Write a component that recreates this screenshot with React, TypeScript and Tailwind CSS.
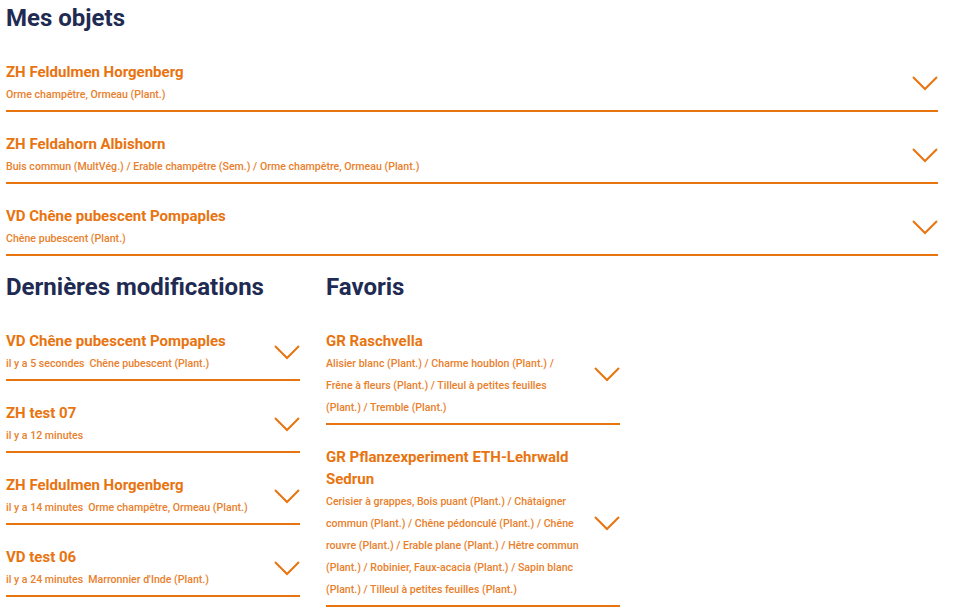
import React from 'react';

type Item = {
  title: string;
  time?: string;
  species: string;
};

const mesObjets: Item[] = [
  { title: 'ZH Feldulmen Horgenberg', species: 'Orme champêtre, Ormeau (Plant.)' },
  {
    title: 'ZH Feldahorn Albishorn',
    species: 'Buis commun (MultVég.) / Erable champêtre (Sem.) / Orme champêtre, Ormeau (Plant.)',
  },
  { title: 'VD Chêne pubescent Pompaples', species: 'Chêne pubescent (Plant.)' },
];

const dernieres: Item[] = [
  { title: 'VD Chêne pubescent Pompaples', time: 'il y a 5 secondes', species: 'Chêne pubescent (Plant.)' },
  { title: 'ZH test 07', time: 'il y a 12 minutes', species: '' },
  { title: 'ZH Feldulmen Horgenberg', time: 'il y a 14 minutes', species: 'Orme champêtre, Ormeau (Plant.)' },
  { title: 'VD test 06', time: 'il y a 24 minutes', species: "Marronnier d'Inde (Plant.)" },
];

const favoris: Item[] = [
  {
    title: 'GR Raschvella',
    species:
      'Alisier blanc (Plant.) / Charme houblon (Plant.) / Frêne à fleurs (Plant.) / Tilleul à petites feuilles (Plant.) / Tremble (Plant.)',
  },
  {
    title: 'GR Pflanzexperiment ETH-Lehrwald Sedrun',
    species:
      'Cerisier à grappes, Bois puant (Plant.) / Châtaigner commun (Plant.) / Chêne pédonculé (Plant.) / Chêne rouvre (Plant.) / Erable plane (Plant.) / Hêtre commun (Plant.) / Robinier, Faux-acacia (Plant.) / Sapin blanc (Plant.) / Tilleul à petites feuilles (Plant.)',
  },
];

function Chevron() {
  return (
    <svg width="26" height="15" viewBox="0 0 26 15" fill="none" className="shrink-0">
      <polyline points="1,1 13,13 25,1" stroke="#e8740f" strokeWidth="2" />
    </svg>
  );
}

function Row({ item, narrow }: { item: Item; narrow?: boolean }) {
  return (
    <div className="flex items-center justify-between gap-[6px] pt-[21px] pb-[4px] border-b-2 border-[#e8740f] cursor-pointer">
      <div className={narrow ? 'w-[254px]' : 'flex-1'}>
        <div className="text-[15px] leading-[22px] font-bold text-[#e8740f]">{item.title}</div>
        <div className="mt-[1px] text-[10.6px] leading-[22px] font-medium text-[#e9802c]">
          {item.time && <span className="mr-[5px]">{item.time}</span>}
          {item.species}
        </div>
      </div>
      <Chevron />
    </div>
  );
}

function Heading({ children }: { children: React.ReactNode }) {
  return (
    <h2 className="text-[24px] leading-[36px] font-bold text-[#1f2b52] mb-[4px]">{children}</h2>
  );
}

export default function App() {
  return (
    <div className="min-h-screen bg-white font-['Roboto','Liberation_Sans',sans-serif]">
      <div className="w-[932px] ml-[6px]">
        {/* Mes objets */}
        <section>
          <Heading>Mes objets</Heading>
          {mesObjets.map((item) => (
            <Row key={item.title} item={item} />
          ))}
        </section>

        <div className="grid grid-cols-[294px_294px] gap-x-[26px] mt-[13px]">
          {/* Dernières modifications */}
          <section>
            <Heading>Dernières modifications</Heading>
            {dernieres.map((item) => (
              <Row key={item.title + item.time} item={item} />
            ))}
          </section>

          {/* Favoris */}
          <section>
            <Heading>Favoris</Heading>
            {favoris.map((item) => (
              <Row key={item.title} item={item} narrow />
            ))}
          </section>
        </div>
      </div>
    </div>
  );
}
